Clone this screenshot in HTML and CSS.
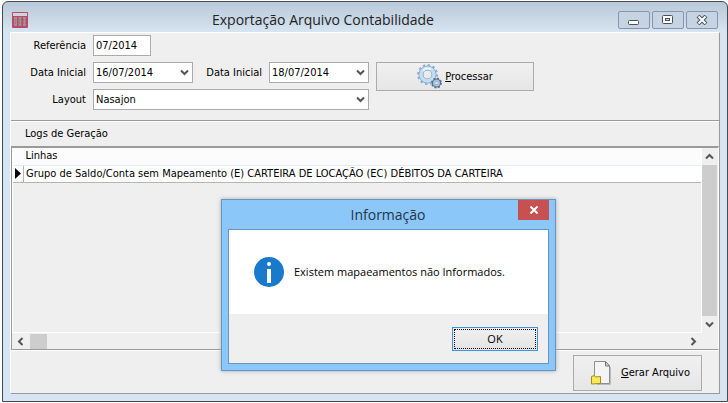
FILE: index.html
```
<!DOCTYPE html>
<html lang="pt-BR">
  <head>
    <meta charset="utf-8" />
    <title>Exportação Arquivo Contabilidade</title>
    <link rel="stylesheet" href="styles.css">
  </head>
  <body>
    <main class="window">
      <header class="titlebar">
        <svg class="app-icon" width="16" height="16" viewBox="0 0 16 16">
          <rect width="16" height="16" rx="1" fill="#b94a63" />
          <rect x="1" y="1" width="14" height="3" fill="#cfd3e0" />
          <path d="M2 5h3v9H2zM6.500 5h3v9h-3zM11 5h3v9h-3z" fill="#a09096" />
          <path d="M1 8h14M1 11h14" stroke="#b94a63" stroke-dasharray="1 1" />
        </svg>
        <h1>Exportação Arquivo Contabilidade</h1>
        <div class="window-buttons">
          <button type="button" aria-label="Minimizar">
            <svg width="12" height="10" viewBox="0 0 12 10">
              <rect x=".5" y="5.500" width="10" height="4" rx="1" fill="#fff" stroke="#4b515c" />
            </svg>
          </button>
          <button type="button" aria-label="Maximizar">
            <svg width="12" height="10" viewBox="0 0 12 10">
              <rect x=".5" y=".5" width="10" height="8" rx="1" fill="#fff" stroke="#4b515c" />
              <rect x="3.500" y="3.500" width="4" height="2" fill="#cbd8e6" stroke="#4b515c" />
            </svg>
          </button>
          <button type="button" aria-label="Fechar">
            <svg width="12" height="10" viewBox="0 0 12 10">
              <path d="M2 1l8 8M10 1L2 9" stroke="#4b515c" stroke-width="4" />
              <path d="M2.500 1.500l7 7M9.500 1.500l-7 7" stroke="#fff" stroke-width="2" />
            </svg>
          </button>
        </div>
      </header>

      <div class="client">
        <form class="filters">
          <label for="referencia">Referência</label>
          <input id="referencia" type="text" value="07/2014" />

          <label class="row-start" for="data-inicial">Data Inicial</label>
          <div class="combo">
            <select id="data-inicial"><option>16/07/2014</option></select>
            <svg width="9" height="7" viewBox="0 0 9 7"><path d="M1 1.500l3.500 3.500L8 1.500" /></svg>
          </div>
          <label for="data-final">Data Inicial</label>
          <div class="combo">
            <select id="data-final"><option>18/07/2014</option></select>
            <svg width="9" height="7" viewBox="0 0 9 7"><path d="M1 1.500l3.500 3.500L8 1.500" /></svg>
          </div>
          <button class="action process" type="button">
            <svg width="25" height="25" viewBox="0 0 25 25">
              <circle cx="10.500" cy="10.500" r="9.500" fill="none" stroke="#8fb0d2" stroke-width="2" stroke-dasharray="2.400 2.570" />
              <circle cx="10.500" cy="10.500" r="6.500" fill="none" stroke="#7fa3c8" stroke-width="5" />
              <circle cx="10.500" cy="10.500" r="6.500" fill="none" stroke="#c3def3" stroke-width="3.500" />
              <path d="M6 6.500a6 6 0 0 1 8-1" fill="none" stroke="#eef7fd" stroke-width="2" />
              <circle cx="19.500" cy="19" r="4.500" fill="none" stroke="#5a7394" stroke-width="2" stroke-dasharray="1.800 1.730" />
              <circle cx="19.500" cy="19" r="3" fill="none" stroke="#52698a" stroke-width="3" />
              <circle cx="19.500" cy="19" r="2.500" fill="none" stroke="#a5c3e0" stroke-width="2" />
            </svg>
            <span><u>P</u>rocessar</span>
          </button>

          <label class="row-start" for="layout">Layout</label>
          <div class="combo wide">
            <select id="layout"><option>Nasajon</option></select>
            <svg width="9" height="7" viewBox="0 0 9 7"><path d="M1 1.500l3.500 3.500L8 1.500" /></svg>
          </div>
        </form>

        <h2 class="logs-title">Logs de Geração</h2>

        <section class="logs">
          <div class="logs-body">
            <table>
              <thead>
                <tr><th class="marker"></th><th>Linhas</th></tr>
              </thead>
              <tbody>
                <tr>
                  <td class="marker">
                    <svg width="6" height="11" viewBox="0 0 6 11"><path d="M0 0l6 5.500L0 11z" /></svg>
                  </td>
                  <td>Grupo de Saldo/Conta sem Mapeamento (E) CARTEIRA DE LOCAÇÃO (EC) DÉBITOS DA CARTEIRA</td>
                </tr>
              </tbody>
            </table>
          </div>
          <div class="scroll-y">
            <svg width="9" height="7" viewBox="0 0 9 7"><path d="M1 5.500L4.500 2 8 5.500" /></svg>
            <div class="thumb"></div>
            <svg width="9" height="7" viewBox="0 0 9 7"><path d="M1 1.500l3.500 3.500L8 1.500" /></svg>
          </div>
          <div class="scroll-x">
            <svg width="7" height="9" viewBox="0 0 7 9"><path d="M5.500 1L2 4.500 5.500 8" /></svg>
            <div class="thumb"></div>
            <svg width="7" height="9" viewBox="0 0 7 9"><path d="M1.500 1L5 4.500 1.500 8" /></svg>
          </div>
        </section>

        <footer class="bottom-bar">
          <button class="action generate" type="button">
            <svg width="22" height="24" viewBox="0 0 22 24">
              <path d="M3.500.5h11l4 4.500v17.500h-15z" fill="#f4f4f4" stroke="#8e8e8e" />
              <path d="M19.500 6v17.500H6" fill="none" stroke="#bbb" />
              <path d="M14.500.5V5h4z" fill="#d9d9d9" stroke="#777" />
              <path d="M.5 15.500l3-1 1 1.500 5-.5v7l-9 .5z" fill="#f7ec55" stroke="#a08c1c" />
            </svg>
            <span><u>G</u>erar Arquivo</span>
          </button>
        </footer>
      </div>

      <div class="dialog" role="dialog" aria-labelledby="dialog-title">
        <div class="dialog-titlebar">
          <h2 id="dialog-title">Informação</h2>
          <button type="button" aria-label="Fechar">
            <svg width="8" height="8" viewBox="0 0 8 8"><path d="M.5.5l7 7M7.500.5l-7 7" /></svg>
          </button>
        </div>
        <div class="dialog-content">
          <div class="message">
            <svg width="30" height="30" viewBox="0 0 30 30">
              <circle cx="15" cy="15" r="15" fill="#1979ca" />
              <circle cx="15" cy="7" r="2" fill="#fff" />
              <rect x="13" y="12" width="4" height="14" fill="#fff" />
            </svg>
            <p>Existem mapaeamentos não Informados.</p>
          </div>
          <div class="dialog-actions">
            <button type="button"><span>OK</span></button>
          </div>
        </div>
      </div>
    </main>
  </body>
</html>
```
FILE: styles.css
```
* {
  box-sizing: border-box;
}

body {
  margin: 0;
  padding: 1px 0 1px 2px;
  background-color: #fff;
  color: #000;
  font: 11px/14px "DejaVu Sans Condensed", "Noto Sans", sans-serif;
}

h1,
h2,
p {
  margin: 0;
  font-weight: normal;
}

button,
input,
select {
  border-radius: 0;
  color: inherit;
  font: inherit;
}

.window {
  position: relative;
  display: flex;
  flex-direction: column;
  min-height: calc(100vh - 2px);
  padding: 0 7px 7px;
  border: 1px solid #444a50;
  border-radius: 6px 6px 0 0;
  background: linear-gradient(#b9c9d8, #d7e4f1 30px);
}

.titlebar {
  display: flex;
  align-items: center;
  height: 30px;
  padding: 5px 2px 0;
}

.titlebar h1 {
  flex: 1;
  color: #222;
  font: 14px/20px "Open Sans", sans-serif;
  text-align: center;
}

.window-buttons {
  display: flex;
  gap: 2px;
}

.window-buttons button {
  display: grid;
  place-items: center;
  width: 32px;
  height: 18px;
  padding: 0;
  border: 1px solid #8796ad;
  border-radius: 2px;
  background-color: #c5d3e3;
}

.client {
  display: flex;
  flex: 1;
  flex-direction: column;
  border: 1px solid #9a9a9a;
  border-top-color: #fff;
  border-left-color: #fff;
  background-color: #efefef;
}

.filters {
  display: grid;
  grid-template-columns: 75px 100px 62px 100px 158px;
  grid-auto-rows: 21px;
  gap: 6px 7px;
  padding: 2px 0 10px;
  border-bottom: 1px solid #9a9a9a;
}

.filters label {
  align-self: center;
  text-align: right;
}

.filters .row-start {
  grid-column: 1;
}

.filters input {
  width: 58px;
  height: 21px;
  padding: 0 2px;
  border: 1px solid #ababab;
  background-color: #fff;
}

.combo {
  position: relative;
}

.combo.wide {
  grid-column: 2 / 5;
}

.combo select {
  appearance: none;
  display: block;
  width: 100%;
  height: 21px;
  padding: 0 2px;
  border: 1px solid #ababab;
  background-color: #fff;
}

.combo svg {
  position: absolute;
  top: 7px;
  right: 4px;
  pointer-events: none;
}

.combo path,
.scroll-x path,
.scroll-y path {
  fill: none;
  stroke: #555;
  stroke-width: 2;
}

.action {
  display: flex;
  align-items: center;
  justify-content: center;
  border: 1px solid #ababab;
  background: linear-gradient(#f0f0f0, #e6e6e6);
}

.process {
  grid-row: 2 / 4;
  grid-column: 5;
  gap: 3px;
  height: 29px;
}

.logs-title {
  padding: 5px 14px;
  border-top: 1px solid #fff;
  font-size: 11px;
  line-height: 14px;
}

.logs {
  display: grid;
  flex: 1;
  grid-template-rows: 1fr 16px;
  grid-template-columns: 1fr 16px;
  border: 1px solid #9a9a9a;
  border-top-width: 2px;
  border-right-color: #fff;
}

.logs-body {
  border: 1px solid #fff;
  border-top: 0;
}

table {
  width: 100%;
  border-collapse: collapse;
}

th,
td {
  height: 17px;
  padding: 0 2px;
  background-color: #fff;
  font-weight: normal;
  text-align: left;
}

th {
  background-color: #fcfcfc;
  border-bottom: 1px solid #e3ebf3;
}

td {
  border-bottom: 1px solid #b5b5b5;
}

td + td {
  border-left: 1px solid #b5b5b5;
}

.marker {
  width: 10px;
}

.marker svg {
  display: block;
}

.scroll-x,
.scroll-y {
  display: flex;
  align-items: center;
  justify-content: space-between;
}

.scroll-y {
  flex-direction: column;
  gap: 5px;
  padding: 5px 1px 5px 0;
}

.scroll-y .thumb {
  flex: 1;
  width: 15px;
  background-color: #cdcdcd;
}

.scroll-x {
  gap: 6px;
  padding: 0 5px;
}

.scroll-x .thumb {
  width: 17px;
  height: 15px;
  margin-right: auto;
  background-color: #cdcdcd;
}

.bottom-bar {
  display: flex;
  justify-content: flex-end;
  padding: 4px 17px 2px;
  border-top: 1px solid #fff;
}

.generate {
  gap: 8px;
  width: 129px;
  height: 36px;
  padding: 0 0 0 6px;
}

.dialog {
  position: absolute;
  top: 197px;
  left: 218px;
  width: 335px;
  padding: 0 6px 6px;
  border: 1px solid #6795c0;
  background-color: #8cc7fa;
  box-shadow: 0 0 4px #aaa;
}

.dialog-titlebar {
  display: flex;
  align-items: flex-start;
  height: 29px;
}

.dialog-titlebar h2 {
  flex: 1;
  padding: 5px 0 0 30px;
  color: #223648;
  font: 14px/20px "Open Sans", sans-serif;
  text-align: center;
}

.dialog-titlebar button {
  display: grid;
  place-items: center;
  width: 31px;
  height: 20px;
  padding: 0;
  border: 0;
  background-color: #c75050;
}

.dialog-titlebar path {
  stroke: #fff;
  stroke-width: 2;
}

.dialog-content {
  border: 1px solid #6795c0;
}

.message {
  display: flex;
  align-items: center;
  gap: 10px;
  height: 84px;
  padding: 0 25px;
  background-color: #fff;
  font: 11px/14px "Open Sans", sans-serif;
  white-space: nowrap;
}

.dialog-actions {
  display: flex;
  justify-content: flex-end;
  padding: 13px 10px 12px;
  background-color: #efefef;
}

.dialog-actions button {
  width: 86px;
  height: 24px;
  padding: 1px;
  border: 1px solid #3c94dd;
  background: linear-gradient(#f0f0f0, #e4e4e4);
  font: 11px/18px "Open Sans", sans-serif;
}

.dialog-actions span {
  display: block;
  border: 1px dotted #000;
}
```
